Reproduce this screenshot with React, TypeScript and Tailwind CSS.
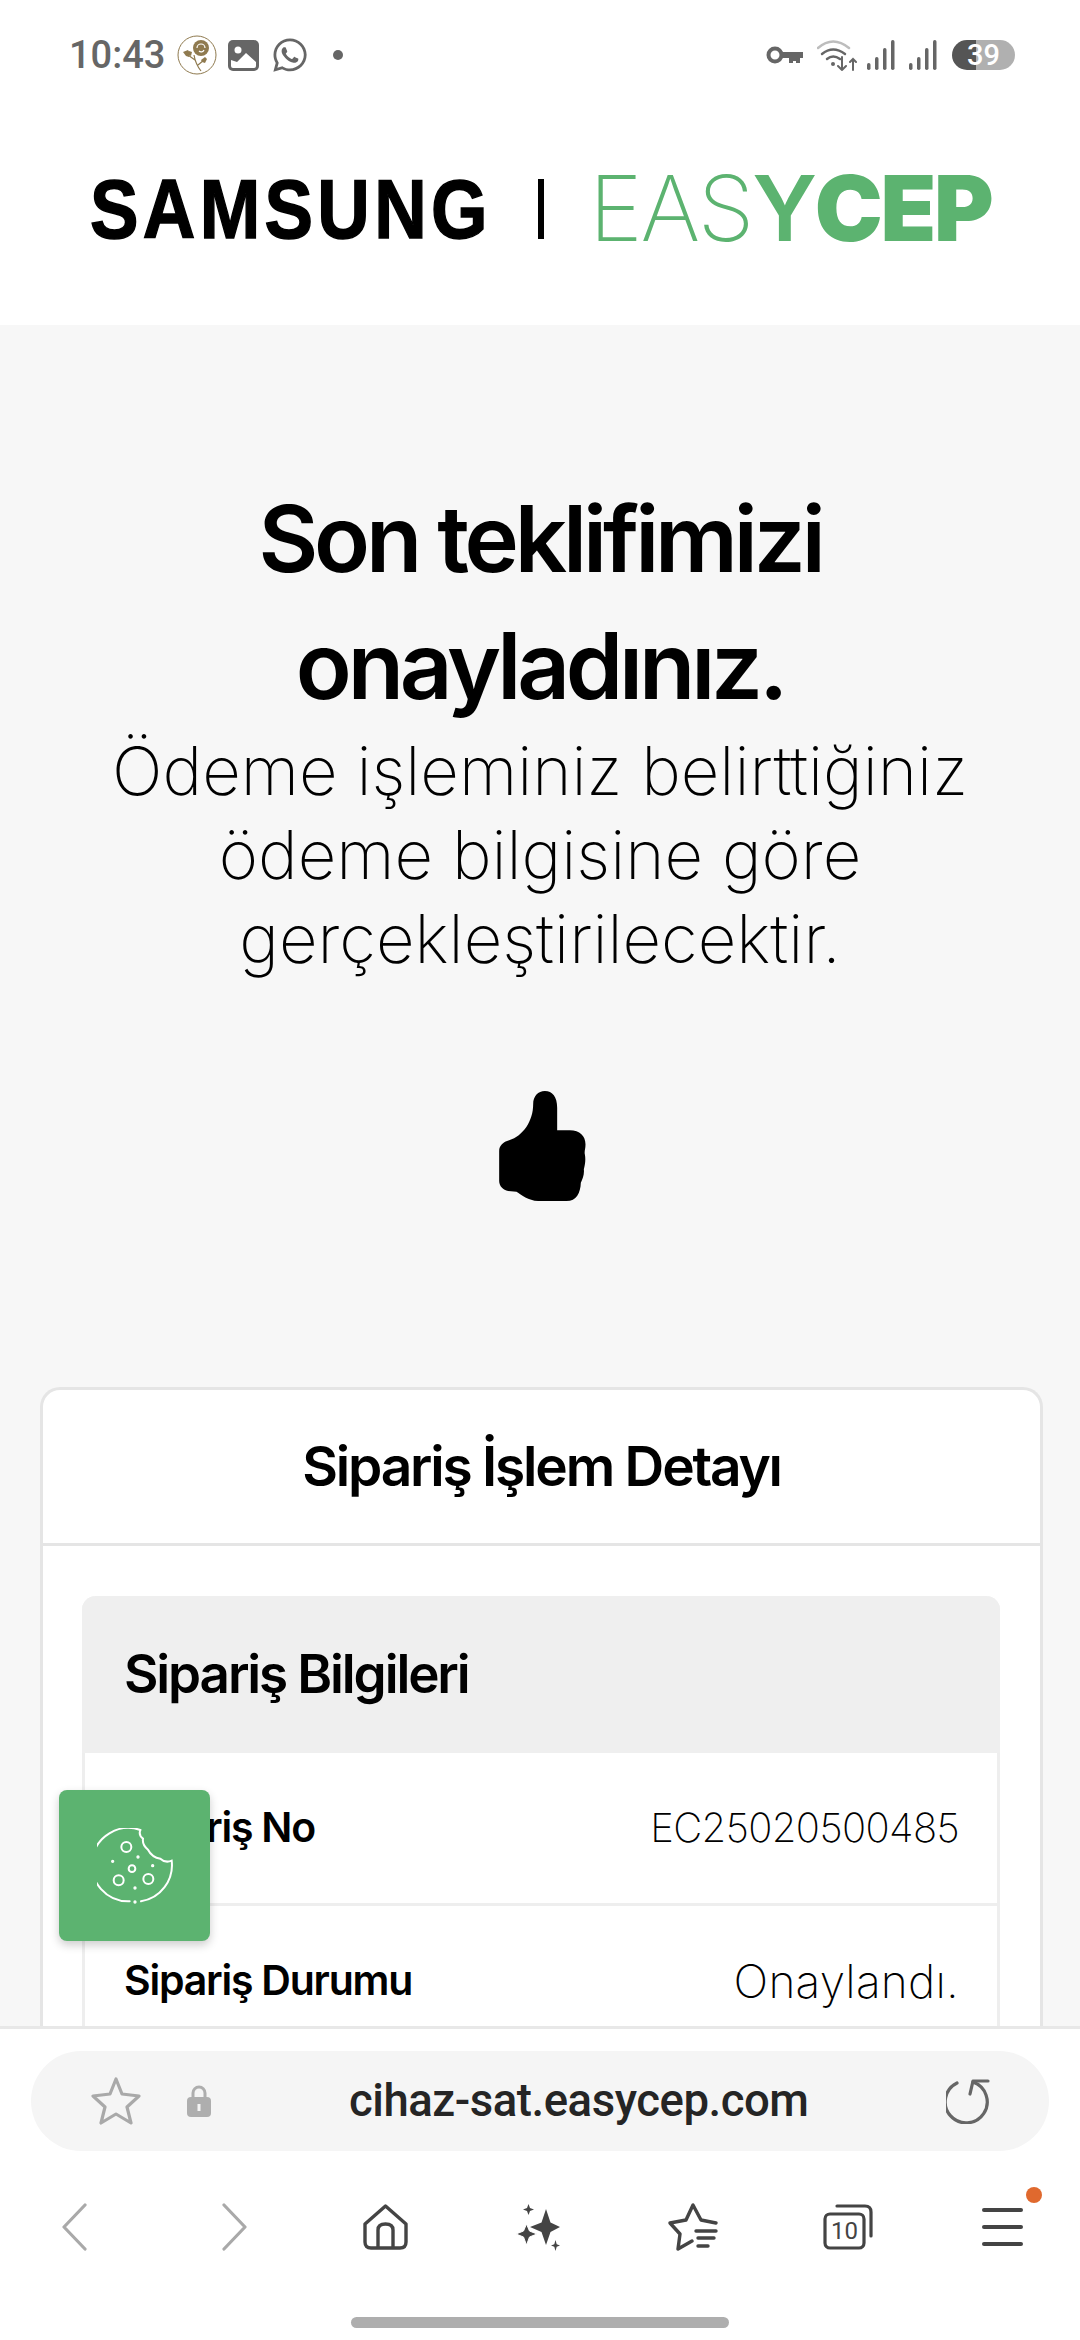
import React from 'react';
import { FaWhatsapp } from 'react-icons/fa';

function StatusBar() {
  return (
    <div className="flex h-[110px] items-center justify-between pl-[69px] pr-[65px] text-[#666666]">
      <div className="flex items-center">
        <span className="font-['Roboto'] text-[38px] font-medium leading-none">10:43</span>
        <svg className="ml-[12px] h-[40px] w-[40px]" viewBox="0 0 40 40">
          <circle cx="20" cy="20" r="19" fill="#fff" stroke="#8f7a4f" strokeWidth="1" />
          <circle cx="24" cy="13" r="8" fill="#8f7a4f" />
          <path d="M20 13a4 4 0 0 1 8 0M22 16a3 3 0 0 0 5-1" stroke="#fff" strokeWidth="1.2" fill="none" />
          <path d="M17 20c1 6 3 11 7 16M18 25l-7-5M21 30l6-5" stroke="#8f7a4f" strokeWidth="1.2" fill="none" />
          <path d="M6 17l5-2 2 3-1 4-3-1zM12 16l3 1-1 4-2-1z" fill="#8f7a4f" />
          <path d="M24 25l4-3 2 2-2 4-3-1z" fill="#8f7a4f" />
        </svg>
        <svg className="ml-[11px] h-[31px] w-[31px]" viewBox="0 0 31 31">
          <rect width="31" height="31" rx="5" fill="#666" />
          <circle cx="10" cy="10" r="3.5" fill="#fff" />
          <path d="M3 26v-6l6 2 9-9 10 9v4q0 2-2 2H5q-2 0-2-2z" fill="#fff" />
        </svg>
        <FaWhatsapp className="ml-[12px] h-[38px] w-[38px]" />
        <span className="ml-[24px] h-[10px] w-[10px] rounded-full bg-[#666666]" />
      </div>
      <div className="flex items-center">
        <svg className="h-[18px] w-[37px]" viewBox="0 0 37 18">
          <circle cx="9" cy="9" r="6.5" fill="none" stroke="#666" strokeWidth="4" />
          <path d="M15 6h22v6h-3v5h-4v-2h-3v2h-4v-5h-8z" fill="#666" />
        </svg>
        <svg className="ml-[14px] h-[32px] w-[40px]" viewBox="0 0 40 32" fill="none" strokeLinecap="round">
          <path d="M1 9Q16-4 32 9" stroke="#bdbdbd" strokeWidth="2.5" />
          <path d="M5 15Q16 6 28 15" stroke="#666" strokeWidth="2.5" />
          <path d="M10 20Q16 15 23 20" stroke="#666" strokeWidth="2.5" />
          <circle cx="16" cy="25" r="2" fill="#666" />
          <path d="M25 18v13M21 27l4 4 4-4" stroke="#666" strokeWidth="2" />
          <path d="M36 31V20M33 23l3-3 3 3" stroke="#666" strokeWidth="2" />
        </svg>
        <svg className="ml-[10px] h-[30px] w-[28px]" viewBox="0 0 28 30" fill="#666">
          <rect x="0" y="23" width="3.5" height="7" rx="1.7" />
          <rect x="8" y="17" width="3.5" height="13" rx="1.7" />
          <rect x="16" y="8" width="3.5" height="22" rx="1.7" />
          <rect x="24" y="0" width="3.5" height="30" rx="1.7" />
        </svg>
        <svg className="ml-[14px] h-[30px] w-[28px]" viewBox="0 0 28 30" fill="#666">
          <rect x="0" y="23" width="3.5" height="7" rx="1.7" />
          <rect x="8" y="17" width="3.5" height="13" rx="1.7" />
          <rect x="16" y="8" width="3.5" height="22" rx="1.7" />
          <rect x="24" y="0" width="3.5" height="30" rx="1.7" />
        </svg>
        <div className="ml-[15px] flex h-[30px] w-[63px] items-center justify-center rounded-full bg-[linear-gradient(90deg,#555555_38%,#b0b0b0_38%)]">
          <span className="font-['Roboto'] text-[29px] font-medium leading-[30px] text-white">39</span>
        </div>
      </div>
    </div>
  );
}

function LogoHeader() {
  return (
    <div className="flex h-[215px] items-center bg-white pb-[18px] pl-[90px]">
      <div className="w-[396px] origin-left scale-x-[0.865] whitespace-nowrap font-['Liberation_Sans'] text-[84px] font-bold leading-none tracking-[0.06em] text-black [-webkit-text-stroke:1.5px_black]">
        SAMSUNG
      </div>
      <div className="ml-[52px] h-[60px] w-[6px] bg-black" />
      <div className="ml-[45px] flex whitespace-nowrap font-['Inter'] text-[91px] leading-none tracking-[-0.025em] text-[#5cb370]">
        <span className="font-extralight">EAS</span>
        <span className="font-semibold">Y</span>
        <span className="font-black">CEP</span>
      </div>
    </div>
  );
}

function ThumbIcon() {
  return (
    <svg className="h-[110px] w-[87px]" viewBox="88 60 260 330">
      <path
        d="M190 100C190 75 205 60 225 60C248 60 262 78 262 110L262 178L300 178C330 178 347 195 347 220C347 235 343 240 345 250C348 265 346 280 342 295C344 310 338 325 333 335C332 365 320 390 290 390L205 390C175 388 155 372 140 362L115 360C100 358 88 345 88 330L88 240C88 225 100 212 118 208C160 195 190 150 190 100Z"
        fill="#000"
      />
    </svg>
  );
}

function OrderRow({ label, value, wide }: { label: string; value: string; wide?: boolean }) {
  return (
    <div className="flex h-[153px] items-center justify-between border-b-[3px] border-[#eeeeee] pl-[39px] pr-[38px]">
      <span className="text-[41px] font-semibold tracking-[-0.03em] text-black">{label}</span>
      <span className={wide ? 'text-[46px] font-extralight tracking-[0.005em] text-black' : 'text-[40px] font-extralight tracking-[-0.015em] text-black'}>
        {value}
      </span>
    </div>
  );
}

function OrderCard() {
  return (
    <div className="ml-[40px] mr-[37px] rounded-t-[20px] border-x-[3px] border-t-[3px] border-[#e5e5e5] bg-white">
      <div className="flex h-[156px] items-center justify-center border-b-[3px] border-[#e5e5e5] text-[55px] font-semibold tracking-[-0.04em] text-black">
        Sipariş İşlem Detayı
      </div>
      <div className="ml-[39px] mr-[40px] mt-[50px] rounded-t-[14px] border-x-[3px] border-[#eeeeee]">
        <div className="-mx-[3px] flex h-[157px] items-center rounded-t-[14px] bg-[#efefef] pl-[42px] text-[53px] font-semibold tracking-[-0.04em] text-black">
          Sipariş Bilgileri
        </div>
        <OrderRow label="Sipariş No" value="EC25020500485" />
        <OrderRow label="Sipariş Durumu" value="Onaylandı." wide />
      </div>
    </div>
  );
}

function CookieButton() {
  return (
    <div className="absolute left-[59px] top-[1790px] flex h-[151px] w-[151px] items-center justify-center rounded-[8px] bg-[#5cb370] shadow-[0_4px_10px_rgba(0,0,0,0.2)]">
      <svg className="h-[76px] w-[76px]" viewBox="140 140 228 228" fill="none" stroke="#fff" strokeWidth="6" strokeLinecap="round">
        <path d="M270 146A110 110 0 1 0 238 360" />
        <path d="M272 360A110 110 0 0 0 364 238Q345 246 330 232Q305 228 293 205Q275 190 278 172Q264 162 270 146" />
        <circle cx="228" cy="197" r="15" />
        <circle cx="245" cy="262" r="10" />
        <circle cx="205" cy="297" r="15" />
        <circle cx="294" cy="293" r="15" />
        <circle cx="263" cy="227" r="2" fill="#fff" />
        <circle cx="187" cy="240" r="2" fill="#fff" />
        <circle cx="307" cy="253" r="2" fill="#fff" />
        <circle cx="254" cy="320" r="2" fill="#fff" />
        <circle cx="254" cy="362" r="2" fill="#fff" />
      </svg>
    </div>
  );
}

function BrowserBar() {
  return (
    <div className="h-[314px] border-t-[3px] border-[#e8e8e8] bg-white">
      <div className="relative mx-[31px] mt-[22px] flex h-[100px] items-center rounded-[50px] bg-[#f5f5f5] pl-[60px] pr-[57px]">
        <svg className="h-[50px] w-[50px]" viewBox="0 0 50 50" fill="none" stroke="#a9a9a9" strokeWidth="3.2" strokeLinejoin="round">
          <path d="M25 3L31 18L48 20L36 31L40 47L25 38L10 47L14 31L2 20L19 18Z" />
        </svg>
        <svg className="ml-[46px] h-[32px] w-[24px]" viewBox="0 0 24 32">
          <path d="M6 14V8a6 6 0 0 1 12 0v6" fill="none" stroke="#aeaeae" strokeWidth="3" />
          <rect x="0" y="12" width="24" height="20" rx="4" fill="#aeaeae" />
          <rect x="10.5" y="19" width="3" height="7" fill="#f5f5f5" />
        </svg>
        <span className="ml-[138px] font-['Roboto'] text-[45.5px] font-medium leading-none tracking-[-0.01em] text-[#252525]">
          cihaz-sat.easycep.com
        </span>
        <svg className="ml-auto h-[46px] w-[46px]" viewBox="0 0 46 46" fill="none" stroke="#666" strokeWidth="3.2" strokeLinecap="round" strokeLinejoin="round">
          <path d="M11 5A21 21 0 1 0 27 4" />
          <path d="M24 16L27 3L42 3" />
        </svg>
      </div>
      <div className="relative mt-[51px] flex h-[50px] items-center pl-[62px]">
        <svg className="h-[48px] w-[25px]" viewBox="0 0 25 48" fill="none" stroke="#a9a9a9" strokeWidth="3.2" strokeLinecap="round" strokeLinejoin="round">
          <path d="M23 2L2 24L23 46" />
        </svg>
        <svg className="ml-[135px] h-[48px] w-[25px]" viewBox="0 0 25 48" fill="none" stroke="#a9a9a9" strokeWidth="3.2" strokeLinecap="round" strokeLinejoin="round">
          <path d="M2 2L23 24L2 46" />
        </svg>
        <svg className="ml-[116px] h-[46px] w-[45px]" viewBox="0 0 45 46" fill="none" stroke="#444" strokeWidth="3.4" strokeLinejoin="round">
          <path d="M22.5 2L43 20V38Q43 44 37 44H8Q2 44 2 38V20Z" />
          <path d="M15 44V26Q15 20 22.5 20Q30 20 30 26V44" />
        </svg>
        <svg className="ml-[108px] h-[47px] w-[44px]" viewBox="0 0 44 47" fill="#444">
          <path d="M30 5L34.5 18.5L44 23L34.5 28L30 41L25.5 28L14 23L25.5 18.5Z" />
          <path d="M10.5 20L13.5 27L21 30L13.5 33L10.5 41L7.5 33L0 30L7.5 27Z" stroke="#fff" strokeWidth="1" />
          <path d="M12.5 0L14 4L18 5.5L14 7L12.5 11L11 7L7 5.5L11 4Z" />
          <path d="M39.5 36L40.7 40.3L44 41.5L40.7 42.7L39.5 47L38.3 42.7L35 41.5L38.3 40.3Z" />
        </svg>
        <svg className="ml-[108px] h-[48px] w-[50px]" viewBox="0 0 50 48" fill="none" stroke="#444" strokeWidth="3.4" strokeLinecap="round" strokeLinejoin="round">
          <path d="M48 20L33 17L25 2L18 17L2 20L12 31L10 46L24 38" />
          <path d="M28 28H48M30 35H46M30 43H40" />
        </svg>
        <svg className="ml-[105px] h-[46px] w-[50px]" viewBox="0 0 50 46" fill="none" stroke="#444" strokeWidth="3.2" strokeLinejoin="round">
          <rect x="2" y="10" width="39" height="34" rx="5" />
          <path d="M14 2H42Q48 2 48 8V32" strokeLinecap="round" />
          <text x="21.5" y="35" textAnchor="middle" fontFamily="Roboto" fontSize="24" fill="#444" stroke="none">10</text>
        </svg>
        <div className="ml-[109px] flex w-[41px] flex-col gap-[12.5px]">
          <div className="h-[4.5px] rounded-full bg-[#444444]" />
          <div className="h-[4.5px] rounded-full bg-[#444444]" />
          <div className="h-[4.5px] rounded-full bg-[#444444]" />
        </div>
        <div className="absolute left-[1026px] top-[-15px] h-[16px] w-[16px] rounded-full bg-[#e0692e]" />
      </div>
      <div className="mx-auto mt-[65px] h-[11px] w-[378px] rounded-full bg-[#aeaeae]" />
    </div>
  );
}

export default function App() {
  return (
    <div className="relative flex h-[2340px] w-[1080px] flex-col overflow-hidden bg-white font-['Inter',sans-serif]">
      <StatusBar />
      <LogoHeader />
      <main className="min-h-0 flex-1 overflow-hidden bg-[#f7f7f7]">
        <h1 className="pt-[150px] text-center text-[92px] font-semibold leading-[127px] tracking-[-0.045em] text-black">
          Son teklifimizi
          <br />
          onayladınız.
        </h1>
        <p className="text-center text-[67px] font-extralight leading-[84px] text-black">
          Ödeme işleminiz belirttiğiniz
          <br />
          ödeme bilgisine göre
          <br />
          gerçekleştirilecektir.
        </p>
        <div className="mt-[110px] flex justify-center pl-[4px]">
          <ThumbIcon />
        </div>
        <div className="mt-[186px]">
          <OrderCard />
        </div>
      </main>
      <BrowserBar />
      <CookieButton />
    </div>
  );
}
